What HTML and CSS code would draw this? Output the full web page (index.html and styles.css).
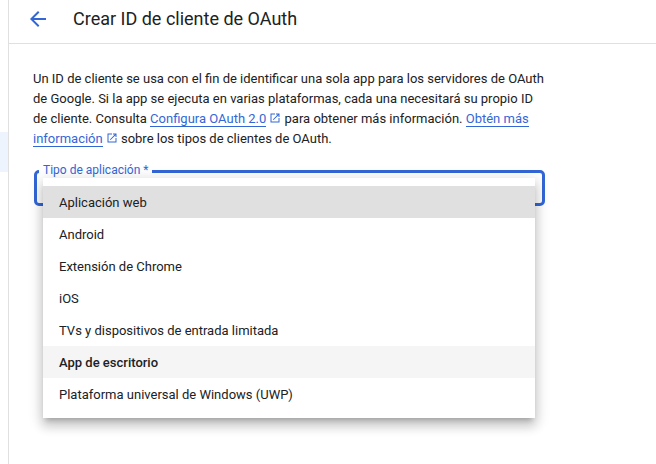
FILE: index.html
```html
<!DOCTYPE html>
<html lang="es">
<head>
<meta charset="utf-8">
<title>Crear ID de cliente de OAuth</title>
<link rel="stylesheet" href="styles.css">
</head>
<body>
<div class="shell">
  <aside class="rail"><div class="rail-active"></div></aside>
  <main class="main">
    <header class="header">
      <svg class="back" width="24" height="24" viewBox="0 0 24 24"><path d="M20 11H7.83l5.59-5.59L12 4l-8 8 8 8 1.41-1.41L7.83 13H20v-2z"/></svg>
      <h1 class="title">Crear ID de cliente de OAuth</h1>
    </header>
    <section class="content">
      <p class="intro">Un ID de cliente se usa con el fin de identificar una sola app para los servidores de OAuth de Google. Si la app se ejecuta en varias plataformas, cada una necesitará su propio ID de cliente. Consulta <a class="link" href="#">Configura OAuth 2.0</a><svg class="ext" viewBox="0 0 24 24"><path d="M19 19H5V5h7V3H3v18h18v-9h-2v7zM14 3v2h3.59l-9.83 9.83 1.41 1.41L19 6.41V10h2V3h-7z"/></svg> para obtener más información. <a class="link" href="#">Obtén más información</a><svg class="ext" viewBox="0 0 24 24"><path d="M19 19H5V5h7V3H3v18h18v-9h-2v7zM14 3v2h3.59l-9.83 9.83 1.41 1.41L19 6.41V10h2V3h-7z"/></svg> sobre los tipos de clientes de OAuth.</p>
      <div class="field">
        <span class="field-label">Tipo de aplicación *</span>
        <ul class="menu">
          <li class="option option-selected">Aplicación web</li>
          <li class="option">Android</li>
          <li class="option">Extensión de Chrome</li>
          <li class="option">iOS</li>
          <li class="option">TVs y dispositivos de entrada limitada</li>
          <li class="option option-hover">App de escritorio</li>
          <li class="option">Plataforma universal de Windows (UWP)</li>
        </ul>
      </div>
    </section>
  </main>
</div>
</body>
</html>
```
FILE: styles.css
```css
* { box-sizing: border-box; }
html, body { margin: 0; height: 100%; background: #fff; overflow: hidden; }
body { font-family: Roboto, "Liberation Sans", sans-serif; color: #202124; }
.shell { display: flex; height: 464px; width: 656px; }
.rail { width: 9px; flex: none; border-right: 1px solid #e0e0e0; padding-top: 132px; }
.rail-active { height: 40px; background: #eef4fd; }
.main { flex: 1; min-width: 0; }
.header { height: 44px; border-bottom: 1px solid #e0e0e0; display: flex; align-items: center; padding-left: 17px; padding-bottom: 5px; }
.back { fill: #3367d6; flex: none; }
.title { margin: 0 0 0 23px; font-size: 18px; line-height: 24px; font-weight: 400; color: #202124; }
.content { padding: 25px 0 0 24px; }
.intro { margin: 0; width: 512px; font-size: 13px; line-height: 20px; color: #202124; }
.link { color: #3367d6; text-decoration: none; border-bottom: 1px solid #3367d6; }
.ext { width: 12px; height: 12px; fill: #3367d6; margin-left: 3px; vertical-align: -1px; }
.field { position: relative; margin: 21px 0 0 1px; width: 511px; height: 36px; border: 3px solid #3367d6; border-radius: 5px; }
.field-label { position: absolute; left: 2px; top: -11px; padding: 0 4px; background: #fff; font-size: 12px; line-height: 16px; color: #3367d6; }
.menu { position: absolute; left: 6px; top: 5px; width: 492px; height: 240px; margin: 0; padding: 8px 0; list-style: none; background: #fff; box-shadow: 0 5px 5px -3px rgba(0,0,0,.2), 0 8px 10px 1px rgba(0,0,0,.14), 0 3px 14px 2px rgba(0,0,0,.12); }
.option { height: 32px; padding: 1px 0 0 16px; font-size: 13px; line-height: 32px; color: #202124; }
.option-selected { background: #e0e0e0; }
.option-hover { background: #f5f5f5; font-weight: 500; }
```
